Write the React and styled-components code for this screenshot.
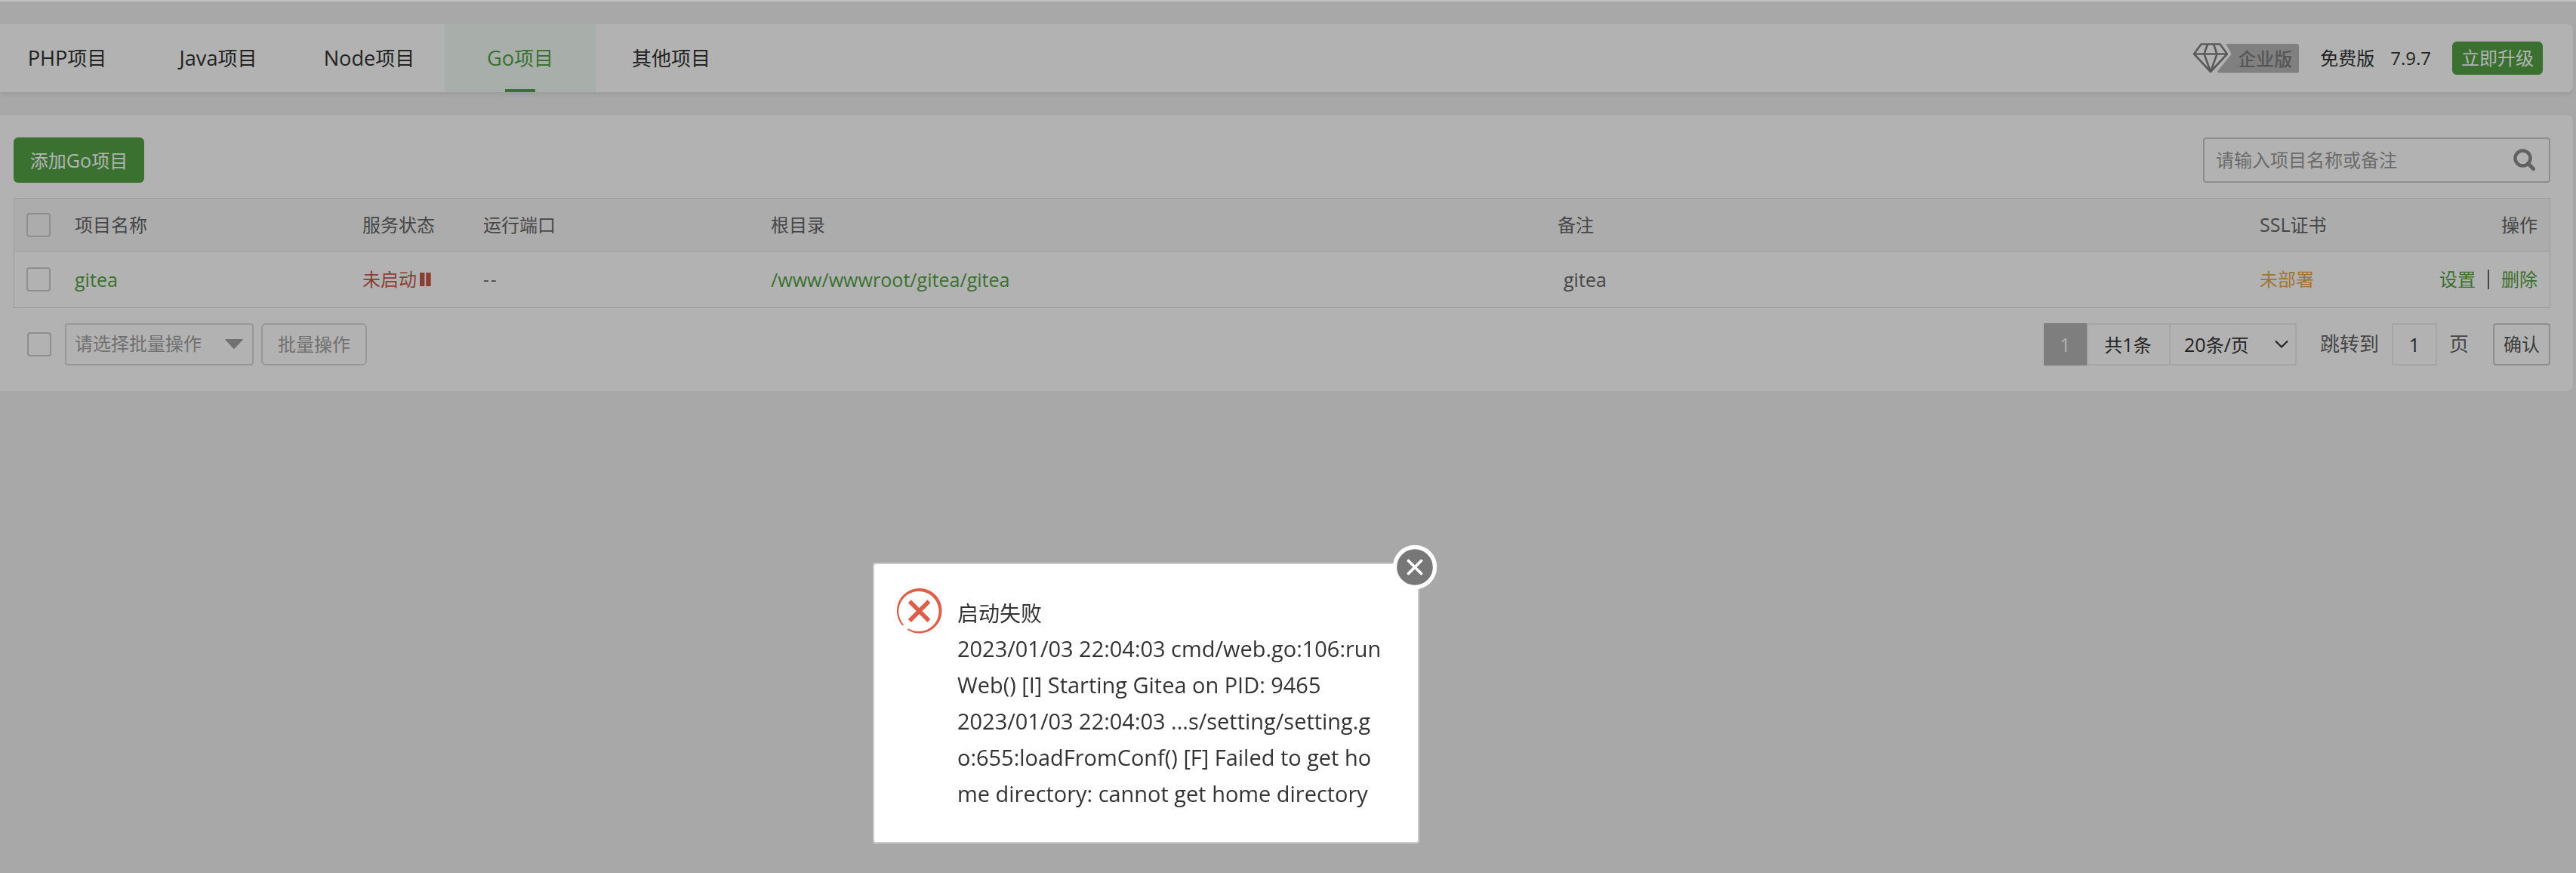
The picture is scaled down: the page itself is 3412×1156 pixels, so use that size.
import React, { useState } from 'react';
import styled, { createGlobalStyle } from 'styled-components';

const tabs = ['PHP项目', 'Java项目', 'Node项目', 'Go项目', '其他项目'];

const errorLines = [
  '2023/01/03 22:04:03 cmd/web.go:106:run',
  'Web() [I] Starting Gitea on PID: 9465',
  '2023/01/03 22:04:03 ...s/setting/setting.g',
  'o:655:loadFromConf() [F] Failed to get ho',
  'me directory: cannot get home directory',
];

const projects = [
  { name: 'gitea', port: '--', path: '/www/wwwroot/gitea/gitea', remark: 'gitea' },
];

// latin words are set a little larger than the chinese around them
const mixed = (text) =>
  text.split(/([\x20-\x7e]+)/).filter(Boolean).map((part, i) =>
    /[\x20-\x7e]/.test(part) ? <Latin key={i}>{part}</Latin> : part
  );

const App = () => {
  const [activeTab, setActiveTab] = useState('Go项目');
  const [showError, setShowError] = useState(true);

  return (
    <Page>
      <GlobalStyle />
      <TopStrip />
      <TabBar>
        <Tabs>
          {tabs.map((tab) => (
            <Tab key={tab} $active={tab === activeTab} onClick={() => setActiveTab(tab)}>
              <span>{mixed(tab)}</span>
            </Tab>
          ))}
        </Tabs>
        <VersionInfo>
          <EnterpriseBadge />
          <VersionText $left={28}>免费版</VersionText>
          <VersionText $left={21}>7.9.7</VersionText>
          <UpgradeButton>立即升级</UpgradeButton>
        </VersionInfo>
      </TabBar>

      <Panel>
        <Toolbar>
          <AddButton><span>{mixed('添加Go项目')}</span></AddButton>
          <SearchBox>
            <span>请输入项目名称或备注</span>
            <svg width="30" height="30" viewBox="0 0 30 30">
              <circle cx="12.5" cy="12.5" r="10" fill="none" stroke="#8c8c8c" strokeWidth="4.4" />
              <path d="M19.5 19.5l7 7" stroke="#8c8c8c" strokeWidth="5" strokeLinecap="round" />
            </svg>
          </SearchBox>
        </Toolbar>

        <Table>
          <HeadRow>
            <Checkbox />
            <span>项目名称</span>
            <span>服务状态</span>
            <span>运行端口</span>
            <span>根目录</span>
            <span>备注</span>
            <span>{mixed('SSL证书')}</span>
            <Actions>操作</Actions>
          </HeadRow>
          {projects.map((project) => (
            <BodyRow key={project.name}>
              <Checkbox />
              <Green><Latin>{project.name}</Latin></Green>
              <Stopped>
                未启动
                <PauseIcon />
              </Stopped>
              <Port>{project.port}</Port>
              <Green><Latin>{project.path}</Latin></Green>
              <Remark><Latin>{project.remark}</Latin></Remark>
              <Orange>未部署</Orange>
              <Actions>
                <Green>设置</Green>
                <Divider />
                <Green>删除</Green>
              </Actions>
            </BodyRow>
          ))}
        </Table>

        <Footer>
          <Checkbox />
          <BatchSelect>
            <span>请选择批量操作</span>
            <svg width="24" height="13" viewBox="0 0 24 13">
              <path d="M1 0h22q1 .4 .4 1.2L12.8 12.4q-.8 .8-1.6 0L.6 1.2Q0 .4 1 0z" fill="#a3a3a3" />
            </svg>
          </BatchSelect>
          <BatchButton>批量操作</BatchButton>
          <Pager>
            <PageNumber><Latin>1</Latin></PageNumber>
            <PageTotal><span>{mixed('共1条')}</span></PageTotal>
            <PageSize>
              <span>{mixed('20条/页')}</span>
              <svg width="20" height="12" viewBox="0 0 20 12">
                <path d="M2 1.5l8 8 8-8" fill="none" stroke="#333" strokeWidth="2.2" />
              </svg>
            </PageSize>
            <PagerLabel $left={31}>跳转到</PagerLabel>
            <PageInput><Latin>1</Latin></PageInput>
            <PagerLabel $left={16}>页</PagerLabel>
            <ConfirmButton>确认</ConfirmButton>
          </Pager>
        </Footer>
      </Panel>

      {showError && (
        <Shade>
          <Dialog>
            <ErrorIcon />
            <Message>
              <MessageTitle>启动失败</MessageTitle>
              {errorLines.map((line) => (
                <LogLine key={line}>{line}</LogLine>
              ))}
            </Message>
            <CloseButton onClick={() => setShowError(false)}>
              <svg width="60" height="60" viewBox="0 0 60 60">
                <circle cx="30" cy="30" r="26.5" fill="#777" stroke="#fff" strokeWidth="5.4" />
                <path d="M21.5 21.5l17 17M38.5 21.5l-17 17" stroke="#fff" strokeWidth="3.8" strokeLinecap="round" />
              </svg>
            </CloseButton>
          </Dialog>
        </Shade>
      )}
    </Page>
  );
};

export default App;

const EnterpriseBadge = () => (
  <Badge>
    <svg width="48" height="40" viewBox="0 0 48 40">
      <path
        d="M11.5 1.5h25L46 14.5 24 38 2 14.5zM2 14.5h44M20 1.5l-4.5 13L24 38l8.5-23.5L28 1.5"
        fill="none"
        stroke="#828282"
        strokeWidth="2.6"
        strokeLinejoin="round"
      />
    </svg>
    <BadgeLabel>企业版</BadgeLabel>
  </Badge>
);

const PauseIcon = () => (
  <svg width="15" height="18" viewBox="0 0 15 18">
    <path d="M0 0h6.4v18H0zM8.2 0h6.5v18H8.2z" fill="#c95a4c" />
  </svg>
);

// the ring is thinner towards its open end at the bottom left
const ErrorIcon = () => (
  <svg width="60" height="60" viewBox="0 0 60 60">
    <path
      d="M7.2 49.3A29.8 29.8 0 1 1 14 55.1L15 53.2A26.6 26.6 0 1 0 9.2 48.4Z"
      fill="#dc6049"
    />
    <path d="M16.8 17.3l25.6 25.6M42.4 17.3l-25.6 25.6" stroke="#dc6049" strokeWidth="5.6" />
  </svg>
);

const GlobalStyle = createGlobalStyle`
  * {
    box-sizing: border-box;
  }
  body {
    margin: 0;
    background-color: #f1f1f1;
    color: #666;
    font-family: "Open Sans", "Noto Sans CJK SC", sans-serif;
    font-size: 24px;
    line-height: 34px;
  }
  p {
    margin: 0;
  }
  button {
    font: inherit;
    cursor: pointer;
  }
  svg {
    display: block;
    flex: none;
  }
`;

const Latin = styled.span`
  font-size: 1.045em;
`;

const Page = styled.div`
  height: 1156px;
  padding-right: 4px;
  overflow: hidden;
  white-space: nowrap;
`;

const TopStrip = styled.div`
  position: relative;
  z-index: 2;
  height: 2px;
  margin: 0 -4px 30px 0;
  background-color: #c1c1c1;
`;

const TabBar = styled.div`
  display: flex;
  justify-content: space-between;
  align-items: center;
  height: 90px;
  padding-right: 40px;
  background-color: #fff;
  border-radius: 0 8px 8px 0;
  box-shadow: 0 4px 6px rgba(0, 0, 0, 0.07);
`;

const Tabs = styled.div`
  display: flex;
  margin-left: -11px;
`;

const Tab = styled.div`
  display: flex;
  flex-direction: column;
  align-items: center;
  justify-content: space-between;
  width: 200px;
  height: 90px;
  padding-top: 28px;
  font-size: 26px;
  cursor: pointer;
  color: ${({ $active }) => ($active ? '#53a347' : '#333')};
  background-color: ${({ $active }) => ($active ? '#f1f9f3' : 'transparent')};

  &::after {
    content: '';
    width: 40px;
    height: 4px;
    background-color: ${({ $active }) => ($active ? '#53a347' : 'transparent')};
  }
`;

const VersionInfo = styled.div`
  display: flex;
  align-items: center;
  color: #333;
`;

const Badge = styled.div`
  display: flex;
  align-items: center;
  height: 40px;
`;

const BadgeLabel = styled.div`
  width: 108px;
  height: 39px;
  margin-left: -15px;
  padding-left: 27px;
  line-height: 39px;
  font-weight: 500;
  color: #7c7c7c;
  background-color: #b8b8b8;
  border-radius: 3px;
  clip-path: polygon(10% 0, 100% 0, 100% 100%, 0 100%, 0 94%, 17% 36%);
`;

const VersionText = styled.span`
  margin-left: ${({ $left }) => $left}px;
`;

const UpgradeButton = styled.button`
  width: 120px;
  height: 44px;
  margin-left: 28px;
  padding: 0;
  line-height: 44px;
  color: #fff;
  background-color: #53a347;
  border: none;
  border-radius: 6px;
`;

const Panel = styled.div`
  height: 366px;
  margin-top: 30px;
  padding: 30px 30px 0 18px;
  background-color: #fff;
  border-radius: 0 8px 8px 0;
  box-shadow: 0 0 4px rgba(0, 0, 0, 0.05);
`;

const Toolbar = styled.div`
  display: flex;
  justify-content: space-between;
  height: 60px;
`;

const AddButton = styled.button`
  width: 173px;
  height: 60px;
  padding: 0;
  color: #fff;
  background-color: #53a347;
  border: none;
  border-radius: 6px;
`;

const SearchBox = styled.div`
  display: flex;
  justify-content: space-between;
  align-items: center;
  width: 460px;
  height: 60px;
  padding: 0 17px 0 15px;
  color: #999;
  border: 2px solid #ccc;
  border-radius: 4px;
`;

const Table = styled.div`
  margin-top: 20px;
  border: 1px solid #ddd;
`;

const HeadRow = styled.div`
  display: grid;
  grid-template-columns: 64px 381px 160px 381px 1042px 930px 1fr auto;
  align-items: center;
  height: 70px;
  padding: 0 16px;
  background-color: #f6f6f6;
  border-bottom: 1px solid #ddd;
`;

const BodyRow = styled(HeadRow)`
  height: 74px;
  background-color: #fff;
  border-bottom: none;
`;

const Checkbox = styled.div`
  flex: none;
  width: 32px;
  height: 32px;
  border: 2px solid #ccc;
  border-radius: 4px;
`;

const Green = styled.span`
  color: #53a347;
`;

const Stopped = styled.span`
  display: flex;
  align-items: center;
  gap: 4px;
  color: #c95a4c;
`;

const Port = styled.span`
  letter-spacing: 2px;
`;

const Orange = styled.span`
  color: #e6a84e;
`;

const Remark = styled.span`
  padding-left: 8px;
`;

const Actions = styled.div`
  display: flex;
  align-items: center;
  justify-content: flex-end;
`;

const Divider = styled.div`
  width: 2px;
  height: 26px;
  margin: 0 16px;
  background-color: #666;
`;

const Footer = styled.div`
  display: flex;
  align-items: center;
  height: 56px;
  margin-top: 20px;
  padding-left: 18px;
`;

const BatchSelect = styled.div`
  display: flex;
  align-items: center;
  justify-content: space-between;
  width: 250px;
  height: 56px;
  margin-left: 18px;
  padding: 0 12px 2px 11px;
  color: #a3a3a3;
  border: 2px solid #d8d8d8;
  border-radius: 4px;
`;

const BatchButton = styled.button`
  width: 140px;
  height: 56px;
  margin-left: 10px;
  padding: 0;
  color: #a3a3a3;
  background-color: transparent;
  border: 2px solid #d8d8d8;
  border-radius: 6px;
`;

const Pager = styled.div`
  display: flex;
  align-items: center;
  margin-left: auto;
  color: #333;
`;

const PageNumber = styled.div`
  width: 57px;
  height: 56px;
  line-height: 56px;
  text-align: center;
  color: #fff;
  background-color: #b5b5b5;
`;

const PageTotal = styled.div`
  width: 111px;
  height: 56px;
  padding-right: 2px;
  line-height: 52px;
  text-align: center;
  border: 2px solid #ececec;
`;

const PageSize = styled.div`
  display: flex;
  align-items: center;
  justify-content: space-between;
  width: 167px;
  height: 56px;
  padding: 0 8px 0 18px;
  border: 2px solid #ececec;
  border-left: none;
`;

const PagerLabel = styled.span`
  margin-left: ${({ $left }) => $left}px;
  padding-bottom: 3px;
  font-size: 26px;
  color: #666;
`;

const PageInput = styled.div`
  width: 60px;
  height: 56px;
  margin-left: 17px;
  line-height: 52px;
  text-align: center;
  border: 2px solid #ececec;
`;

const ConfirmButton = styled.button`
  width: 76px;
  height: 56px;
  margin-left: 32px;
  padding: 0;
  color: #555;
  background-color: #fff;
  border: 2px solid #ccc;
  border-radius: 4px;
`;

const Shade = styled.div`
  position: fixed;
  inset: 0;
  padding: 745px 0 0 1156px;
  background-color: rgba(0, 0, 0, 0.3);
`;

const Dialog = styled.div`
  position: relative;
  display: flex;
  align-items: flex-start;
  width: 724px;
  height: 372px;
  padding: 32px 30px;
  background-color: #fff;
  background-clip: padding-box;
  border: 2px solid rgba(255, 255, 255, 0.4);
  border-radius: 4px;
`;

const Message = styled.div`
  margin: 9px 0 0 20px;
  font-size: 28px;
  line-height: 48px;
  color: #333;
`;

const MessageTitle = styled.p`
  height: 47px;
`;

const LogLine = styled.p`
  font-size: 28.95px;
`;

const CloseButton = styled.button`
  position: absolute;
  top: -26px;
  right: -26px;
  padding: 0;
  background: none;
  border: none;
`;
